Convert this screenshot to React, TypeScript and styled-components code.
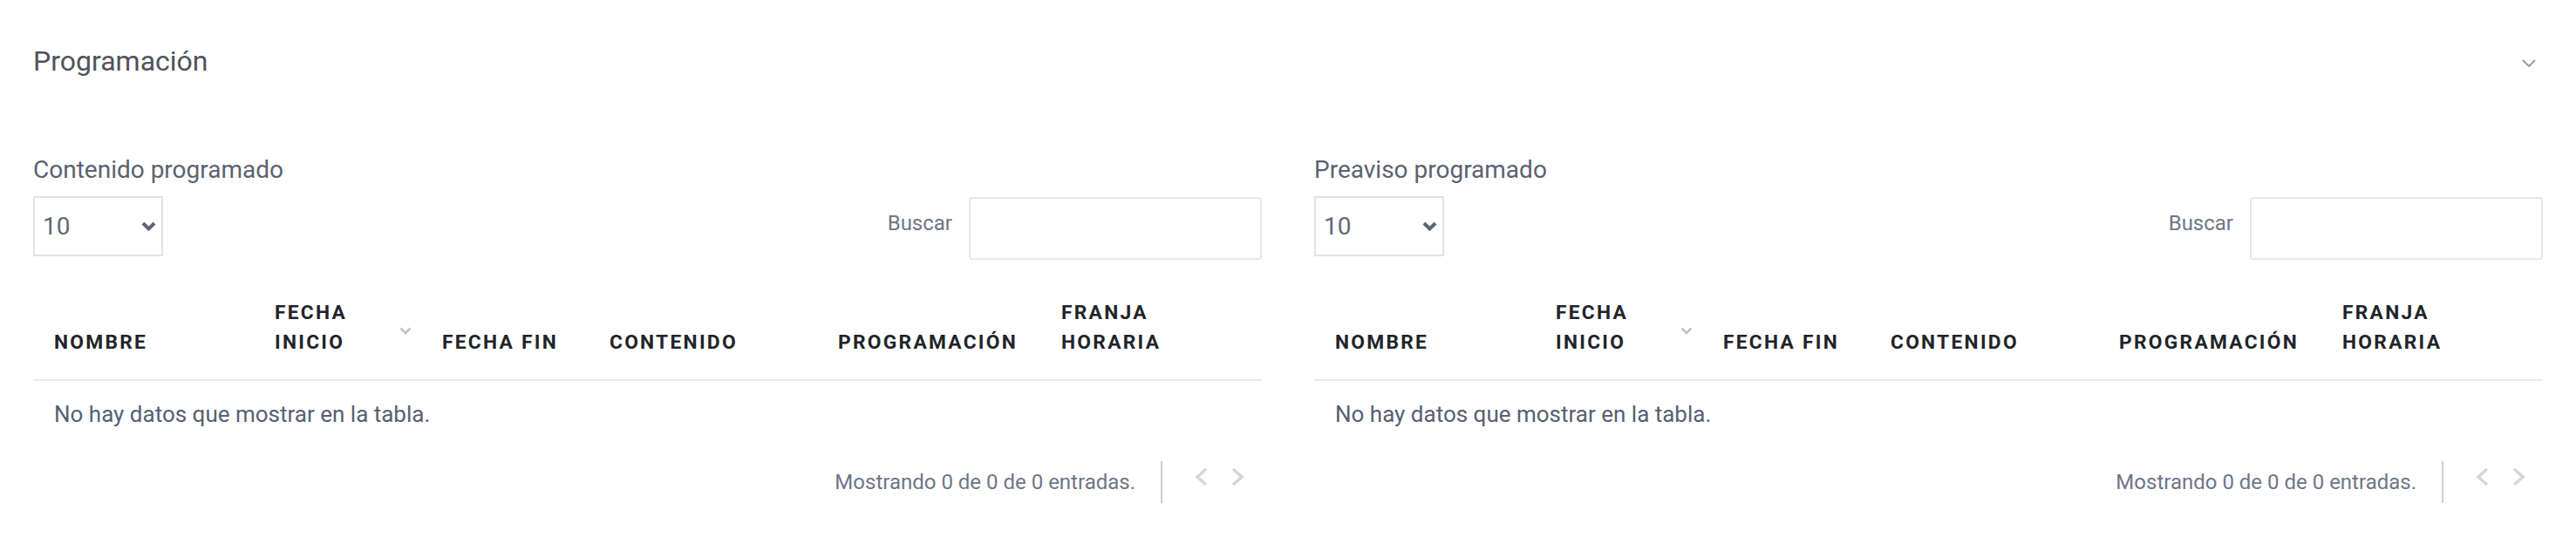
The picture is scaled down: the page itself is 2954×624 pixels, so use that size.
import React from "react";
import styled, { createGlobalStyle } from "styled-components";

const GlobalStyle = createGlobalStyle`
  html, body {
    margin: 0;
    padding: 0;
    background: #ffffff;
  }
  body {
    font-family: Roboto, "Liberation Sans", Arial, sans-serif;
    -webkit-font-smoothing: antialiased;
  }
  *, *::before, *::after {
    box-sizing: border-box;
  }
`;

const Page = styled.section`
  padding: 0 38px;
`;

const Header = styled.header`
  display: flex;
  align-items: center;
  justify-content: space-between;
  height: 140px;
`;

const Title = styled.h2`
  margin: 0;
  font-size: 32px;
  font-weight: 400;
  line-height: 38px;
  color: #4f535a;
`;

const CollapseToggle = styled.button`
  display: flex;
  border: 0;
  background: none;
  padding: 0;
  margin: 4px 8px 0 0;
  color: #9b9b9b;
  cursor: pointer;
`;

const Panels = styled.div`
  display: grid;
  grid-template-columns: 1fr 1fr;
  column-gap: 60px;
  margin-top: 38px;
`;

const Panel = styled.div`
  min-width: 0;
`;

const PanelTitle = styled.h3`
  margin: 0 0 13px;
  font-size: 28px;
  font-weight: 400;
  line-height: 33.6px;
  color: #5a6271;
`;

const Controls = styled.div`
  display: flex;
  justify-content: space-between;
  align-items: flex-start;
`;

const SelectWrap = styled.div`
  position: relative;
  width: 149px;
  height: 69px;
`;

const PageSize = styled.select`
  appearance: none;
  -webkit-appearance: none;
  width: 100%;
  height: 100%;
  margin: 0;
  border: 2px solid #e3e3e3;
  border-radius: 0;
  background: #ffffff;
  padding: 0 0 0 9px;
  font-family: inherit;
  font-size: 28px;
  color: #5f6878;
  outline: none;
`;

const SelectArrow = styled.svg`
  position: absolute;
  right: 8px;
  top: 29px;
  pointer-events: none;
`;

const Search = styled.label`
  display: flex;
  align-items: center;
  margin-top: 1px;
`;

const SearchLabel = styled.span`
  font-size: 24px;
  color: #6e7687;
  margin: 0 19px 11px 0;
`;

const SearchInput = styled.input`
  width: 336px;
  height: 72px;
  border: 2px solid #e4e8ec;
  border-radius: 4px;
  padding: 0 14px;
  font-family: inherit;
  font-size: 24px;
  color: #4a5160;
  outline: none;
`;

const Table = styled.div`
  margin-top: 20px;
`;

const HeadRow = styled.div`
  display: grid;
  grid-template-columns: 253px 192px 192px 262px 256px 1fr;
  align-items: end;
  border-bottom: 2px solid #e7eaee;
`;

const HeadCell = styled.div<{ $sortable?: boolean }>`
  display: flex;
  align-items: center;
  justify-content: space-between;
  padding: 24px ${(p) => (p.$sortable ? "11px" : "24px")} 25px 24px;
  font-size: 22.75px;
  font-weight: 700;
  letter-spacing: 0.1em;
  line-height: 34px;
  text-transform: uppercase;
  white-space: nowrap;
  color: #212429;
`;

const SortIcon = styled.svg`
  flex: none;
  margin-top: 8px;
  color: #c2c2c2;
`;

const EmptyRow = styled.div`
  padding: 20px 24px;
  font-size: 26px;
  line-height: 36px;
  color: #566072;
`;

const Footer = styled.div`
  display: flex;
  justify-content: flex-end;
  align-items: center;
  margin-top: 16px;
  padding-right: 20px;
`;

const FooterInfo = styled.span`
  font-size: 24px;
  line-height: 36px;
  color: #6e7687;
`;

const Divider = styled.span`
  width: 2px;
  height: 48px;
  margin: 0 37px 0 29px;
  background: #cfcfcf;
`;

const PagerButton = styled.button<{ $gap?: number }>`
  display: flex;
  border: 0;
  background: none;
  padding: 0;
  margin: 0 0 12px ${(p) => p.$gap ?? 0}px;
  color: #d3d6db;
  cursor: default;
`;

type Column = { lines: string[]; sortable?: boolean };

const columns: Column[] = [
  { lines: ["Nombre"] },
  { lines: ["Fecha", "Inicio"], sortable: true },
  { lines: ["Fecha fin"] },
  { lines: ["Contenido"] },
  { lines: ["Programación"] },
  { lines: ["Franja", "Horaria"] },
];

const ChevronDown = ({ w, h, stroke }: { w: number; h: number; stroke: number }) => (
  <svg width={w} height={h} viewBox={`0 0 ${w} ${h}`} fill="none">
    <polyline
      points={`${stroke / 2},${stroke / 2} ${w / 2},${h - stroke / 2} ${w - stroke / 2},${stroke / 2}`}
      stroke="currentColor"
      strokeWidth={stroke}
      strokeLinejoin="miter"
    />
  </svg>
);

const ScheduleTable = ({ title }: { title: string }) => (
  <Panel>
    <PanelTitle>{title}</PanelTitle>
    <Controls>
      <SelectWrap>
        <PageSize defaultValue="10">
          <option value="10">10</option>
          <option value="25">25</option>
          <option value="50">50</option>
        </PageSize>
        <SelectArrow width="17" height="11" viewBox="0 0 17 11">
          <polyline points="2,2 8.5,8.5 15,2" fill="none" stroke="#5e6676" strokeWidth="4" />
        </SelectArrow>
      </SelectWrap>
      <Search>
        <SearchLabel>Buscar</SearchLabel>
        <SearchInput type="text" />
      </Search>
    </Controls>
    <Table>
      <HeadRow>
        {columns.map((c) => (
          <HeadCell key={c.lines.join(" ")} $sortable={c.sortable}>
            <span>
              {c.lines.map((l, i) => (
                <React.Fragment key={l}>
                  {i > 0 && <br />}
                  {l}
                </React.Fragment>
              ))}
            </span>
            {c.sortable && (
              <SortIcon width="14" height="9" viewBox="0 0 14 9">
                <polyline points="1.5,1.5 7,7 12.5,1.5" fill="none" stroke="currentColor" strokeWidth="2.5" />
              </SortIcon>
            )}
          </HeadCell>
        ))}
      </HeadRow>
      <EmptyRow>No hay datos que mostrar en la tabla.</EmptyRow>
    </Table>
    <Footer>
      <FooterInfo>Mostrando 0 de 0 de 0 entradas.</FooterInfo>
      <Divider />
      <PagerButton aria-label="Anterior">
        <svg width="15" height="22" viewBox="0 0 15 22">
          <polyline points="13,2 3,11 13,20" fill="none" stroke="currentColor" strokeWidth="3.5" />
        </svg>
      </PagerButton>
      <PagerButton aria-label="Siguiente" $gap={27}>
        <svg width="15" height="22" viewBox="0 0 15 22">
          <polyline points="2,2 12,11 2,20" fill="none" stroke="currentColor" strokeWidth="3.5" />
        </svg>
      </PagerButton>
    </Footer>
  </Panel>
);

export default function App() {
  return (
    <>
      <GlobalStyle />
      <Page>
        <Header>
          <Title>Programación</Title>
          <CollapseToggle aria-label="Contraer">
            <ChevronDown w={16} h={9} stroke={2} />
          </CollapseToggle>
        </Header>
        <Panels>
          <ScheduleTable title="Contenido programado" />
          <ScheduleTable title="Preaviso programado" />
        </Panels>
      </Page>
    </>
  );
}
